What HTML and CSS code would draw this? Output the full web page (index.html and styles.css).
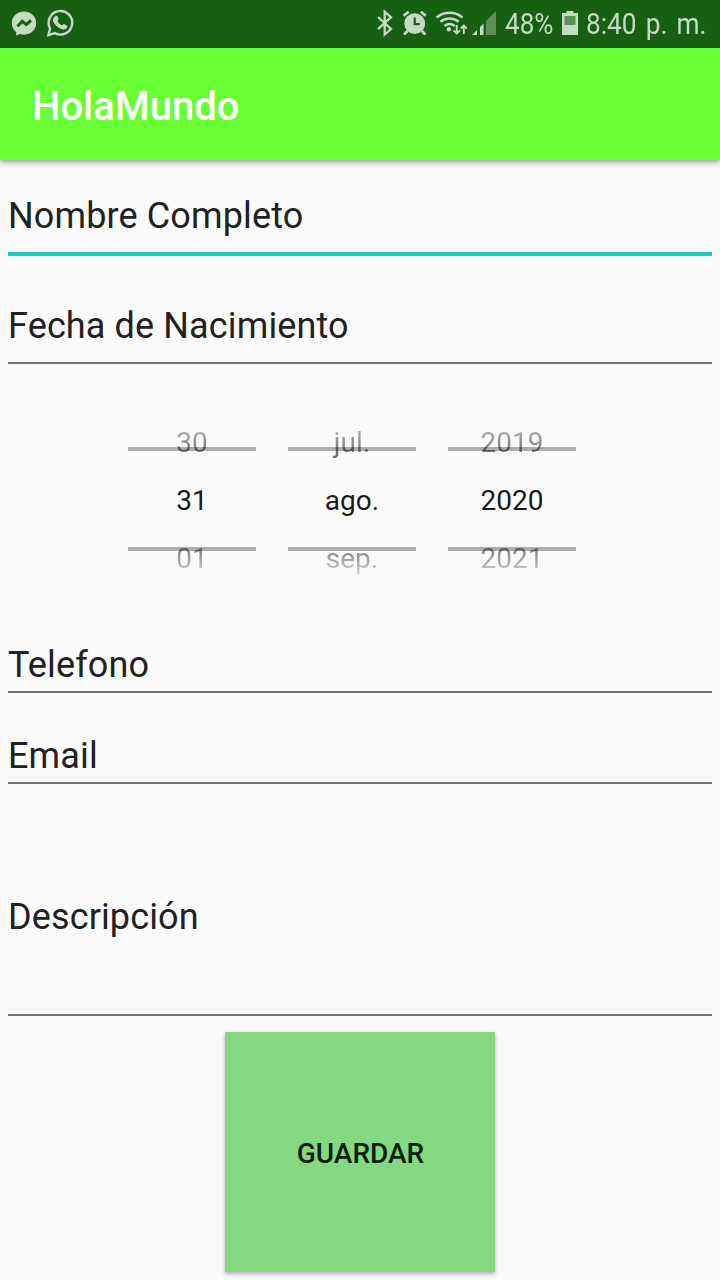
FILE: index.html
```html
<!DOCTYPE html>
<html lang="es">
<head>
<meta charset="utf-8">
<title>HolaMundo</title>
<link rel="stylesheet" href="styles.css">
</head>
<body>
<header class="status">
  <svg class="status-icons" width="500" height="48" viewBox="0 0 500 48" aria-hidden="true">
    <!-- Messenger -->
    <path fill="#c6dac4" d="M24 11.500c-7 0-12.200 5-12.200 11.600 0 3.900 1.700 7 4.400 9.100v3.300l3.700-1.400c1.300.4 2.700.6 4.100.6 7 0 12.200-5 12.200-11.600s-5.200-11.600-12.200-11.600z"/>
    <path fill="none" stroke="#175f12" stroke-width="3" d="M17.500 26.300l4.800-5 4 3.300 4.700-4.300"/>
    <!-- WhatsApp -->
    <g transform="translate(-1 -.3)">
      <path fill="none" stroke="#c6dac4" stroke-width="2.400" d="M49.400 35.400l1.700-6.600a11.800 11.800 0 1 1 4.600 4.600z"/>
      <path fill="#c6dac4" d="M56.500 16.200c.6-.4 1.600-.4 2 .5l1 2.400c.2.600-.1 1.200-1.100 2.300 1.100 2.200 2.600 3.500 4.900 4.500 1-1.200 1.500-1.700 2.100-1.400l2.500 1.200c.7.400.5 1.600.1 2.400-.9 1.400-2.900 2-4.700 1.400-4.600-1.400-7.700-4.400-9.200-8-.7-2 .5-4.200 2.400-5.300z"/>
    </g>
    <!-- Bluetooth -->
    <path fill="none" stroke="#c6dac4" stroke-width="2.300" d="M378 17l13 12-6.300 5.500V11.800l6.300 5.400-13 12"/>
    <!-- Alarm -->
    <circle cx="414.700" cy="23.700" r="10.400" fill="#c6dac4"/>
    <path fill="none" stroke="#c6dac4" stroke-width="2.700" d="M403.600 15.700l5-4M425.800 15.700l-5-4M407.500 31l-3.500 3.500M421.900 31l3.500 3.500"/>
    <path fill="none" stroke="#175f12" stroke-width="2.200" d="M414.700 17.500v6.700h5"/>
    <!-- Wi-Fi -->
    <g fill="none" stroke="#c6dac4" stroke-width="2.500">
      <path d="M436.700 17.500c7.500-6.300 18.200-6.300 25.700 0M440.500 21.800c5.300-4.500 12.800-4.500 18.100 0M444.400 26c3.200-2.500 7.200-2.500 10.400 0"/>
      <path stroke-width="1.900" d="M456.700 25v8.500M453.500 30.300l3.200 3.200 3.200-3.200M463.800 34v-8M460.800 28.500l3-3 3 3"/>
    </g>
    <circle cx="448.800" cy="29.200" r="2.200" fill="#c6dac4"/>
    <!-- Mobile signal -->
    <path fill="#c6dac4" d="M472 35l5-5v5zM480 35v-8l3.500-3.500V35z"/>
    <path fill="#5d8f59" d="M486 35V21l10-10v24z"/>
  </svg>
  <span class="percent"><span class="narrow">48%</span></span>
  <svg class="battery" width="16" height="24" viewBox="0 0 16 24" aria-hidden="true">
    <path fill="#c6dac4" d="M4.500 0h7v2H16v22H0V2h4.500z"/>
    <path fill="#5d8f59" d="M2.500 5h11v9h-11z"/>
  </svg>
  <span class="clock"><span class="narrow">8:40 p. m.</span></span>
</header>
<div class="appbar">HolaMundo</div>
<main class="form">
  <div class="field name">Nombre Completo</div>
  <div class="field birth">Fecha de Nacimiento</div>
  <div class="picker">
    <div class="wheel"><span class="prev">30</span><span>31</span><span class="next">01</span></div>
    <div class="wheel"><span class="prev">jul.</span><span>ago.</span><span class="next">sep.</span></div>
    <div class="wheel"><span class="prev">2019</span><span>2020</span><span class="next">2021</span></div>
  </div>
  <div class="field phone">Telefono</div>
  <div class="field email">Email</div>
  <div class="field description">Descripción</div>
  <button class="save" type="button">GUARDAR</button>
</main>
</body>
</html>
```
FILE: styles.css
```css
* { box-sizing: border-box; }
body {
  margin: 0;
  height: 1280px;
  overflow: hidden;
  background: #fafafa;
  color: #212121;
  font-family: Roboto, "Liberation Sans", sans-serif;
}
.status {
  display: flex;
  height: 48px;
  background: #175f12;
  color: #c6dac4;
  font-size: 30px;
  line-height: 48px;
  white-space: nowrap;
}
.status-icons { flex: none; }
.narrow {
  display: inline-block;
  transform: scaleX(.87);
  transform-origin: 0 50%;
}
.percent { width: 57px; padding-left: 5px; }
.percent, .clock { flex: none; }
.battery { flex: none; margin: 11px 8px 0 5px; }
.clock { width: 129px; }
.clock .narrow { transform: scaleX(.875); word-spacing: 3px; }
.appbar {
  height: 112px;
  padding-left: 32px;
  background: #69ff35;
  box-shadow: 0 2px 6px rgba(0, 0, 0, .42);
  clip-path: inset(0 0 -12px 0);
  color: #fff;
  font-size: 40px;
  font-weight: 500;
  line-height: 118px;
}
.form {
  display: flex;
  flex-direction: column;
  padding: 0 8px;
}
.field {
  border-bottom: 2px solid #757575;
  font-size: 36px;
  letter-spacing: .13px;
  line-height: 48px;
}
.name { padding: 32px 0 12px; border-bottom: 4px solid #1accbc; }
.birth { padding: 46px 0 12px; }
.picker {
  display: flex;
  gap: 32px;
  margin: 50px 0 0 120px;
}
.wheel {
  display: flex;
  flex-direction: column;
  width: 128px;
  height: 174px;
  background:
    linear-gradient(#adadad, #adadad) 0 33px / 100% 4px no-repeat,
    linear-gradient(#adadad, #adadad) 0 133px / 100% 4px no-repeat;
  color: #1a1a1a;
  font-size: 28px;
  line-height: 58px;
  text-align: center;
}
.prev, .next {
  background-clip: text;
  -webkit-background-clip: text;
  color: transparent;
}
.prev { background-image: linear-gradient(rgba(0, 0, 0, .14), rgba(0, 0, 0, .72)); }
.next { background-image: linear-gradient(rgba(0, 0, 0, .72), rgba(0, 0, 0, .12) 82%); }
.phone { padding: 53px 0 2px; }
.email { padding: 39px 0 2px; }
.description { padding: 109px 0 73px; }
.save {
  align-self: center;
  width: 270px;
  height: 240px;
  margin-top: 16px;
  padding: 2px 0 0 1px;
  border: 0;
  background: #85d882;
  box-shadow: 0 2px 4px rgba(0, 0, 0, .3);
  color: #06200a;
  font: 500 28px Roboto, "Liberation Sans", sans-serif;
}
```
